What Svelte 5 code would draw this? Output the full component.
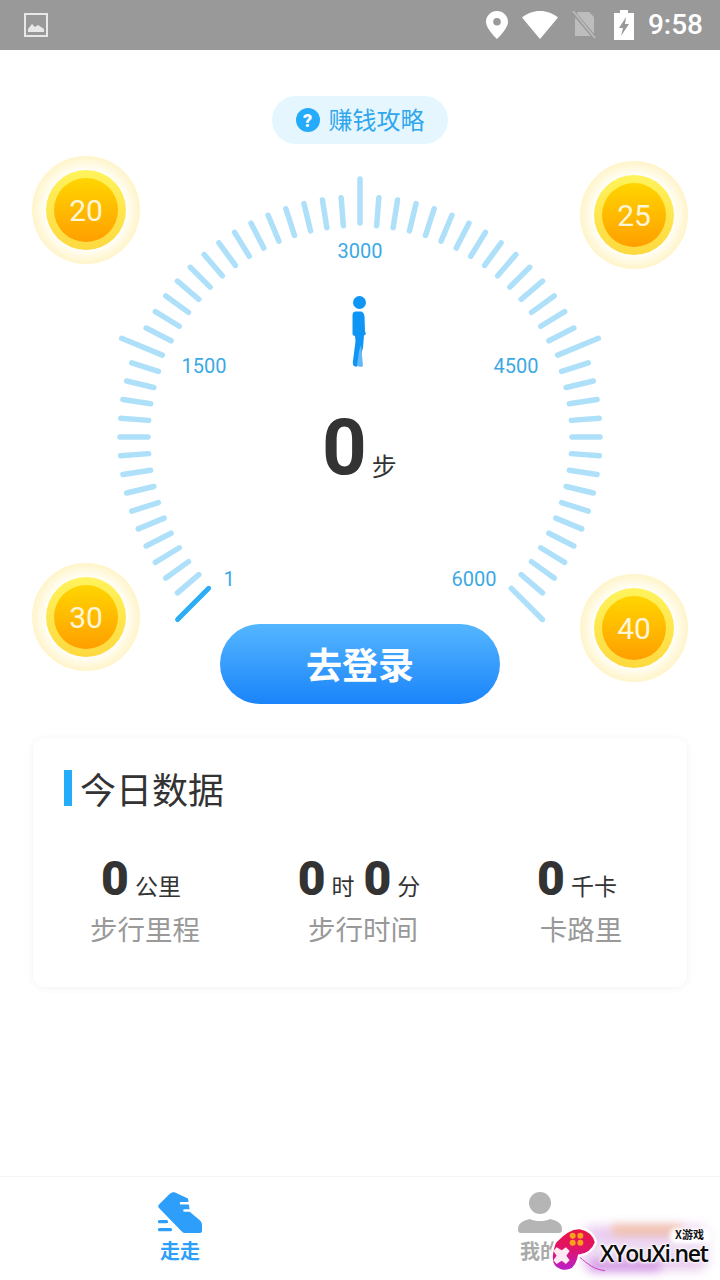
<script>
  const CX = 360, CY = 437;
  const ticks = Array.from({ length: 61 }, (_, i) => {
    const deg = -135 + i * 4.5;
    const a = (deg * Math.PI) / 180;
    const major = i % 15 === 0;
    const inner = major ? 214 : 212;
    const outer = major ? 258 : 240;
    return {
      x1: CX + inner * Math.sin(a), y1: CY - inner * Math.cos(a),
      x2: CX + outer * Math.sin(a), y2: CY - outer * Math.cos(a),
      active: i === 0
    };
  });
  const scale = [
    { t: '1', x: 229, y: 586 }, { t: '1500', x: 204, y: 373 }, { t: '3000', x: 360, y: 258 },
    { t: '4500', x: 516, y: 373 }, { t: '6000', x: 474, y: 586 }
  ];
  const coins = [
    { v: 20, cls: 'c1' }, { v: 25, cls: 'c2' }, { v: 30, cls: 'c3' }, { v: 40, cls: 'c4' }
  ];
</script>

<div class="page">
  <header class="status">
    <svg class="s-pic" viewBox="0 0 24 24" width="24" height="24"><rect x="1" y="1" width="22" height="22" fill="none" stroke="#e8e8e8" stroke-width="2"/><path d="M4 19v-3l4-5 3 3 3-2 6 4v3z" fill="#e8e8e8"/></svg>
    <span class="grow"></span>
    <svg viewBox="0 0 22 28" width="22" height="28"><path fill-rule="evenodd" d="M11 0C5 0 0 4.800 0 10.800 0 18 11 28 11 28s11-10 11-17.200C22 4.800 17 0 11 0zm0 14.500a3.800 3.800 0 1 1 0-7.600 3.800 3.800 0 0 1 0 7.600z" fill="#fff"/></svg>
    <svg class="s-wifi" viewBox="0 0 36 28" width="36" height="28"><path d="M18 28 0 6.500C5 2.500 11 0 18 0s13 2.500 18 6.500z" fill="#fff"/></svg>
    <svg class="s-sim" viewBox="0 0 24 28" width="24" height="28"><path d="M6 1h11l5 5v19H3V4z" fill="#bdbdbd"/><path d="M1 1l22 26" stroke="#999" stroke-width="4"/><path d="M1 0l22 27" stroke="#bdbdbd" stroke-width="1.600"/></svg>
    <svg class="s-bat" viewBox="0 0 20 30" width="20" height="30"><path fill-rule="evenodd" d="M6 0h8v3h6v27H0V3h6zM12 7 5 18h4l-2 8 8-12h-4z" fill="#fff"/></svg>
    <span class="time">9:58</span>
  </header>

  <main class="main">
    <section class="hero">
      <div class="pill">
        <span class="q">?</span>
        <span class="pill-t">赚钱攻略</span>
      </div>
      <div class="dial">
        <svg class="gauge" viewBox="0 144 720 480" width="720" height="480">
          {#each ticks as t}
            <line x1={t.x1} y1={t.y1} x2={t.x2} y2={t.y2} class:on={t.active} class="tick" />
          {/each}
          {#each scale as s}
            <text x={s.x} y={s.y} class="lbl" text-anchor="middle">{s.t}</text>
          {/each}
          <circle cx="359.500" cy="302.500" r="6.500" fill="#0f96f5"/>
          <path d="M356 311.500c-2.500 0-3.500 1.500-3.500 4v18c0 1.500 1 2.500 2.500 2.500l.5 5-2.500 20c-.5 3 0 5 2 5.500 2 .5 3-.5 4-3l4-16 1-12 2-1.500-1-2.500 -.5-15c0-3-2-5-4-5z" fill="#0f96f5"/>
          <path d="M361 345l2 21c-2 1.500-4 1-6-1l2-14z" fill="#62b8f8"/>
        </svg>
        <div class="count"><b>0</b><span>步</span></div>
        {#each coins as c}
          <div class="coin {c.cls}"><div class="disk"><div class="core">{c.v}</div></div></div>
        {/each}
      </div>
      <button class="login">去登录</button>
    </section>

    <section class="card">
      <h2><i></i>今日数据</h2>
      <div class="stats">
        <div class="stat">
          <p class="val"><b>0</b><span>公里</span></p>
          <p class="name">步行里程</p>
        </div>
        <div class="stat">
          <p class="val"><b>0</b><span>时</span><b class="next">0</b><span>分</span></p>
          <p class="name">步行时间</p>
        </div>
        <div class="stat">
          <p class="val"><b>0</b><span>千卡</span></p>
          <p class="name">卡路里</p>
        </div>
      </div>
    </section>
  </main>

  <nav class="tabs">
    <div class="tab active">
      <svg viewBox="0 0 48 48" width="48" height="48">
        <path d="M13.500 5 16 3.500c1-.5 2-.5 3 0l13 6 2 13.500 9.500 8c1.500 1.200 2.500 3 2.500 5v6c0 1.200-.8 2-2 2H29c-1.200 0-2.200-.4-3-1.200L3 19c-1-1.200-1-2.600 0-3.600z" fill="#2d9ffb"/>
        <path d="M25 14.300h9M28.500 21.500h6" stroke="#fff" stroke-width="2.600" stroke-linecap="round"/>
        <path d="M3.500 32.700h7M3.500 40.700h11" stroke="#2d9ffb" stroke-width="3.200" stroke-linecap="round"/>
      </svg>
      <span>走走</span>
    </div>
    <div class="tab">
      <svg viewBox="0 0 48 48" width="48" height="48">
        <circle cx="24" cy="14" r="11" fill="#b5b5b5"/>
        <path d="M2 41c0-7 4-9 12-11 3 1.500 6 2 10 2s7-.5 10-2c8 2 12 4 12 11 0 2-1 3-3 3H5c-2 0-3-1-3-3z" fill="#b5b5b5"/>
      </svg>
      <span>我的</span>
    </div>
    <div class="mark">
      <div class="glow"></div>
      <div class="glow-low"></div>
      <div class="glow-top"></div>
      <div class="bubble"></div>
      <svg class="pad" viewBox="145 160 165 150" width="55" height="50">
        <defs>
          <linearGradient id="padfill" x1="0" y1="0" x2="0" y2="1">
            <stop offset="0" stop-color="#ea1440"/>
            <stop offset=".5" stop-color="#e0146a"/>
            <stop offset="1" stop-color="#b820d4"/>
          </linearGradient>
        </defs>
        <path d="M232 258c30 25 45 38 78 42" fill="none" stroke="#c93fc0" stroke-width="3"/>
        <path d="M160 215Q154 228 150 255Q148 290 175 298Q195 305 212 295Q228 280 232 255Q270 250 283 215Q275 180 235 172Q200 170 160 215Z" fill="url(#padfill)" stroke="#fff" stroke-width="7"/>
        <circle cx="213" cy="195" r="9" fill="#f9a11b"/><circle cx="236" cy="195" r="9" fill="#f9a11b"/>
        <circle cx="213" cy="216" r="9" fill="#f9a11b"/><circle cx="236" cy="216" r="9" fill="#f9a11b"/>
        <path d="M165 230l15 9 13-9 11 11-10 14 10 14-11 11-13-10-15 10-10-11 10-14-10-14z" fill="#fdeaf2"/>
      </svg>
      <span class="mark-small">X游戏</span>
      <span class="mark-big">XYouXi.net</span>
    </div>
  </nav>
</div>

<style>
  :global(body) { margin: 0; background: #fff; }
  .page {
    width: 720px; height: 1280px; overflow: hidden; display: flex; flex-direction: column;
    font-family: Roboto, "Noto Sans CJK SC", sans-serif; color: #333;
  }
  .status {
    height: 50px; flex: none; background: #999; display: flex; align-items: center;
    padding: 0 17px 0 24px; box-sizing: border-box;
  }
  .status svg { flex: none; }
  .grow { flex: 1; }
  .s-wifi { margin-left: 14px; }
  .s-sim { margin-left: 14px; }
  .s-bat { margin-left: 18px; }
  .time { margin-left: 14px; color: #fff; font-size: 28px; line-height: 50px; font-weight: 500; }

  .main { flex: 1; display: flex; flex-direction: column; }
  .hero { position: relative; display: flex; flex-direction: column; align-items: center; padding-top: 46px; }
  .pill {
    width: 176px; height: 48px; border-radius: 24px; background: #e6f6ff; color: #2fa6ee;
    display: flex; align-items: center; justify-content: center; gap: 9px; font-size: 24px; box-sizing: border-box;
  }
  .pill-t { margin-top: -4px; }
  .q {
    width: 24px; height: 24px; border-radius: 50%; background: #24abfa; color: #fff;
    font-size: 18px; font-weight: 900; display: flex; align-items: center; justify-content: center;
  }
  .dial { position: relative; width: 720px; height: 480px; }
  .gauge { position: absolute; inset: 0; }
  .tick { stroke: #aee0fa; stroke-width: 5.500; stroke-linecap: round; }
  .tick.on { stroke: #2cadf5; stroke-width: 5; }
  .lbl { font-size: 20px; fill: #3aa9e4; font-family: Roboto, sans-serif; }
  .count {
    position: absolute; left: 322px; top: 248px; display: flex; align-items: baseline; gap: 5px;
  }
  .count b { font-size: 78px; line-height: 112px; font-weight: 700; color: #333; }
  .count span { font-size: 25px; color: #333; position: relative; top: 2px; }

  .coin {
    position: absolute; width: 108px; height: 108px; border-radius: 50%;
    background: radial-gradient(closest-side, #fff 0 72%, #fffbe8 82%, #fff4c9 100%);
    display: flex; align-items: center; justify-content: center;
  }
  .c1 { left: 32px; top: 12px; }
  .c2 { left: 580px; top: 17px; }
  .c3 { left: 32px; top: 419px; }
  .c4 { left: 580px; top: 430px; }
  .disk {
    width: 80px; height: 80px; border-radius: 50%;
    background: linear-gradient(#fff35c, #fdd93f);
    display: flex; align-items: center; justify-content: center;
  }
  .core {
    width: 64px; height: 64px; border-radius: 50%;
    background: linear-gradient(#ffd500, #ff9f00);
    color: #fff6d8; font-size: 30px; display: flex; align-items: center; justify-content: center;
  }
  .login {
    width: 280px; height: 80px; border: 0; border-radius: 40px; padding: 0 0 3px;
    background: linear-gradient(#55b6ff, #1a84fa);
    color: #fff; font: 700 36px "Noto Sans CJK SC", sans-serif;
  }

  .card {
    margin: 34px 33px 0; height: 249px; border-radius: 12px; background: #fff;
    box-shadow: 0 1px 8px rgba(0, 0, 0, .055); box-sizing: border-box; padding-top: 32px;
  }
  h2 {
    margin: 0; display: flex; align-items: center; gap: 8px; padding-left: 31px; height: 36px;
    font-size: 36px; font-weight: 400; color: #333;
    font-family: "Noto Sans CJK SC", sans-serif;
  }
  h2 i { width: 8px; height: 36px; background: #24abfa; }
  .stats { display: grid; grid-template-columns: repeat(3, 218px); padding-left: 3px; margin-top: 43px; }
  .stat { text-align: center; }
  .val { margin: 0; height: 62px; line-height: 60px; white-space: nowrap; padding-right: 8px; }
  .val b { font-size: 48px; font-weight: 900; color: #333; }
  .val span { font-size: 23px; margin-left: 6px; color: #333; }
  .val .next { margin-left: 9px; }
  .name { margin: 0; font-size: 27.500px; line-height: 40px; color: #999; }

  .tabs {
    position: relative; flex: none; height: 104px; border-top: 1px solid #f4f4f4; display: grid;
    grid-template-columns: 360px 360px; box-sizing: border-box;
  }
  .tab {
    display: flex; flex-direction: column; align-items: center; padding-top: 12px; color: #aaa;
    font-size: 20px; font-weight: 700; line-height: 30px;
  }
  .tab.active { color: #2d9ffb; }
  .mark { position: absolute; left: 540px; top: 38px; width: 180px; height: 65px; }
  .glow {
    position: absolute; left: 42px; top: 12px; width: 126px; height: 42px; filter: blur(6px);
    background: linear-gradient(#dfb0ea, #f0e2f5 55%, #dca6e4);
    border-radius: 10px; opacity: .85;
  }
  .glow-low {
    position: absolute; left: 50px; top: 46px; width: 70px; height: 10px; filter: blur(5px);
    background: #c77fe0; opacity: .7;
  }
  .glow-top {
    position: absolute; left: 72px; top: 10px; width: 70px; height: 10px; filter: blur(4px);
    background: #f3b98c; opacity: .75;
  }
  .bubble {
    position: absolute; left: 130px; top: 13px; width: 42px; height: 16px; border-radius: 6px; background: #fff;
    filter: blur(2px);
  }
  .pad { position: absolute; left: 10px; top: 9px; }
  .mark-small {
    position: absolute; left: 135px; top: 13px; font: 700 11px/12px "Noto Sans CJK SC", sans-serif; color: #111;
  }
  .mark-big {
    position: absolute; left: 60px; top: 27px; font: 600 23px/22px "Open Sans", sans-serif; color: #0c0c0c; letter-spacing: -1.300px;
    text-shadow: 0 0 2px #fff, 0 0 2px #fff, 0 0 3px #fff, 0 0 4px #fff;
  }
</style>
